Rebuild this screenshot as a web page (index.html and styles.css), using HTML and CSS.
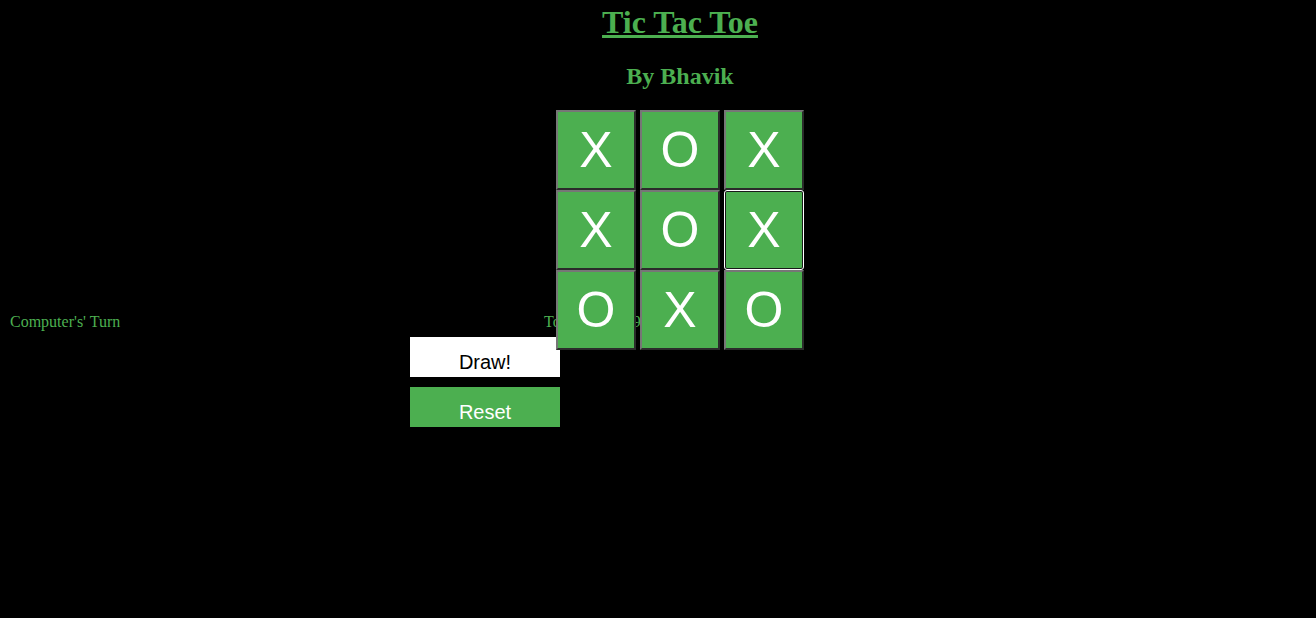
FILE: index.html
```html
<!DOCTYPE html>
<html>
<head>
<meta charset="utf-8">
<title>Tic Tac Toe</title>
<link rel="stylesheet" href="styles.css">
</head>
<body>
<header class="header">
  <h1 class="title">Tic Tac Toe</h1>
  <h2 class="subtitle">By Bhavik</h2>
</header>
<div class="board-wrap">
  <div class="board">
    <button class="cell">X</button>
    <button class="cell">O</button>
    <button class="cell">X</button>
    <button class="cell">X</button>
    <button class="cell">O</button>
    <button class="cell cell-focus">X</button>
    <button class="cell">O</button>
    <button class="cell">X</button>
    <button class="cell">O</button>
  </div>
</div>
<div class="status">
  <p class="turn">Computer's' Turn</p>
  <p class="moves">Total Moves: 9</p>
</div>
<div class="controls">
  <div class="result">Draw!</div>
  <div class="reset">Reset</div>
</div>
</body>
</html>
```

FILE: styles.css
```css
html, body {
  margin: 0;
  padding: 0;
  background: #000;
}
body {
  font-family: "Liberation Serif", "Times New Roman", serif;
  color: #4CAF50;
  width: 1316px;
}
.header {
  display: flex;
  flex-direction: column;
  align-items: center;
  padding-left: 44px;
}
.title {
  margin: 4px 0 0;
  font-size: 32px;
  font-weight: bold;
  text-decoration: underline;
  line-height: normal;
}
.subtitle {
  margin: 22px 0 20px;
  font-size: 24px;
  font-weight: bold;
  line-height: normal;
}
.board-wrap {
  display: flex;
  justify-content: center;
  padding-left: 44px;
  position: relative;
  z-index: 1;
}
.board {
  display: grid;
  grid-template-columns: repeat(3, 80px);
  grid-auto-rows: 80px;
  column-gap: 4px;
  row-gap: 0;
}
.cell {
  width: 80px;
  height: 80px;
  margin: 0;
  padding: 0;
  background: #4CAF50;
  color: #fff;
  font-family: "Liberation Sans", Arial, sans-serif;
  font-size: 50px;
  line-height: 1;
  border-width: 2px;
  border-style: solid;
  border-color: #767676 #2b2b2b #2b2b2b #767676;
  box-sizing: border-box;
}
.cell-focus {
  border-color: #1a1a1a;
  border-radius: 3px;
  outline: 1px solid #fff;
  outline-offset: -1px;
}
.status {
  display: flex;
  margin-top: -37px;
  padding-left: 10px;
  font-size: 16px;
  line-height: 18px;
}
.status p {
  margin: 0;
}
.turn {
  width: 534px;
}
.controls {
  display: flex;
  flex-direction: column;
  gap: 10px;
  margin-top: 6px;
  padding-left: 410px;
}
.result, .reset {
  width: 150px;
  height: 40px;
  box-sizing: border-box;
  padding-top: 14px;
  text-align: center;
  font-family: "Liberation Sans", Arial, sans-serif;
  font-size: 20px;
  line-height: 23px;
}
.result {
  background: #fff;
  color: #000;
}
.reset {
  background: #4CAF50;
  color: #fff;
}
```
